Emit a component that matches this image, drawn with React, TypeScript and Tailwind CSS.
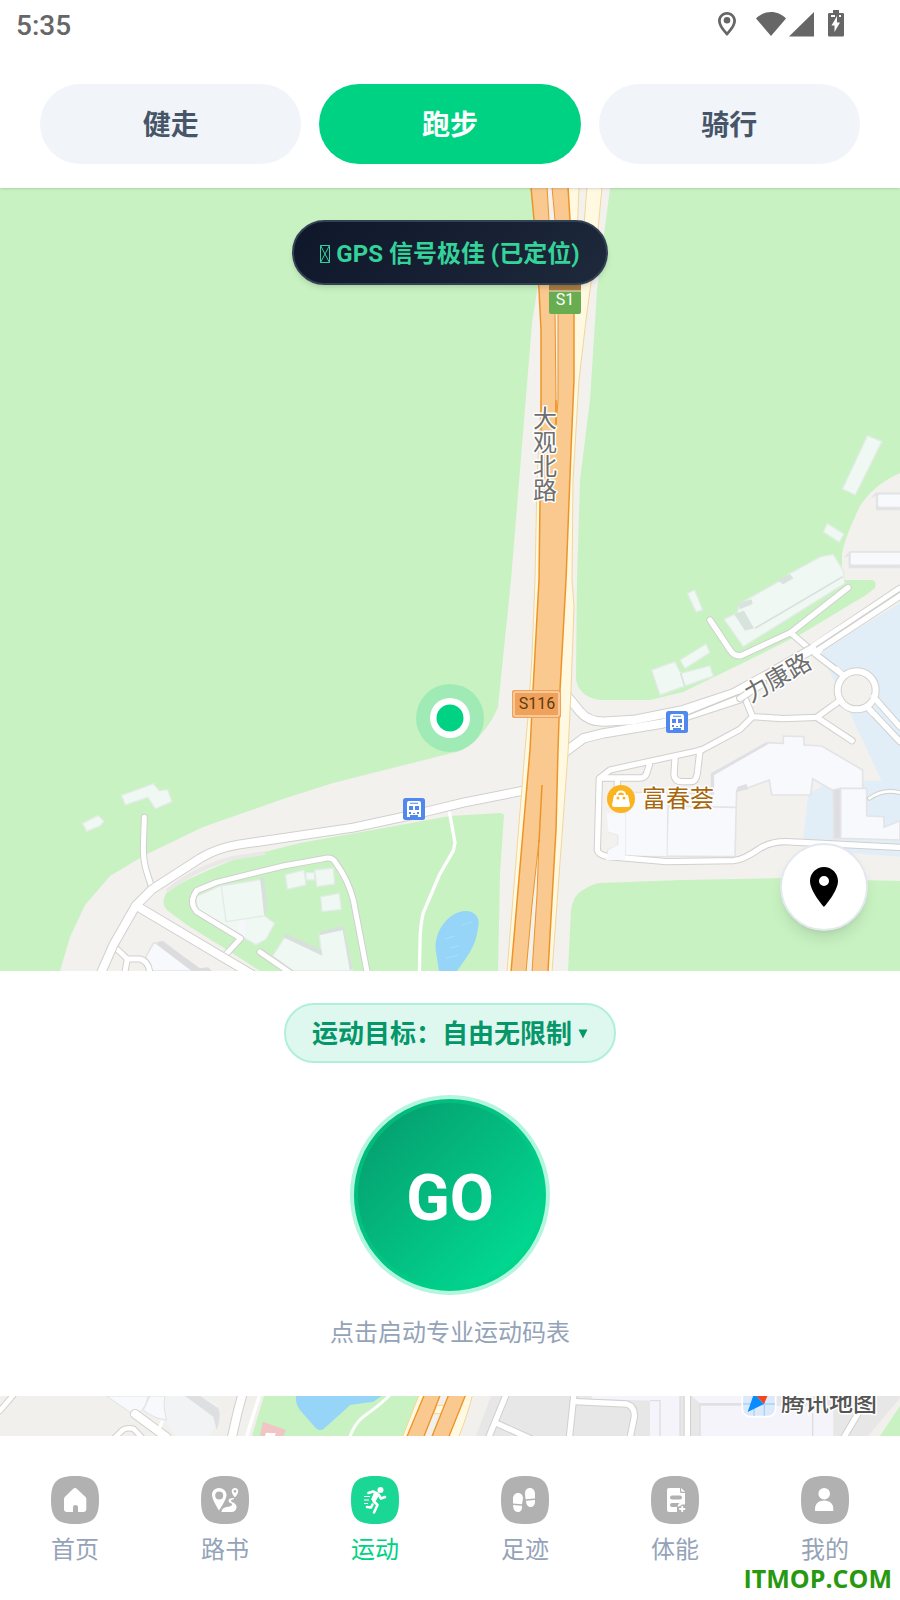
import type { ReactNode } from "react";

const FONT = "font-[Roboto,'Noto_Sans_CJK_SC',sans-serif]";

const SPORTS = ["健走", "跑步", "骑行"];

function StatusBar() {
  return (
    <div className="flex h-12 items-center justify-between px-4 text-[#666666]">
      <span className="pt-1 text-[28px] leading-8 font-medium">5:35</span>
      <svg viewBox="0 0 140 32" className="mr-9 h-8 w-[140px]" fill="#666666" aria-hidden="true">
        <path
          fillRule="evenodd"
          d="M19 4c-5 0-9 4-9 9 0 6 9 15 9 15s9-9 9-15c0-5-4-9-9-9zm0 2.800c3.600 0 6.200 2.700 6.200 6.200 0 3.500-3.500 8-6.200 11-2.700-3-6.200-7.500-6.200-11 0-3.500 2.600-6.200 6.200-6.200z"
        />
        <circle cx="19" cy="12.300" r="3.300" />
        <path d="M63 28 48 10.500C52 6.500 57 4 63 4s11 2.500 15 6.500z" />
        <path d="M106 4v24.500H81z" />
        <path d="M125 2h6v3h3.500c1 0 1.500.500 1.500 1.500v20.500c0 1-.5 1.500-1.500 1.500h-13c-1 0-1.500-.5-1.500-1.500V6.500c0-1 .5-1.500 1.500-1.500h3.500z" />
        <path d="M129 8v6.500h3l-5.500 9.500v-6.500h-3zM123 7h4v2h-4zM131 7h2v2h-2z" fill="#fff" />
      </svg>
    </div>
  );
}

function BusStop({ x, y }: { x: number; y: number }) {
  return (
    <g transform={`translate(${x} ${y})`}>
      <rect width="22" height="22" rx="2.500" fill="#5088f0" />
      <path d="M4 5q0-2 2-2h10q2 0 2 2v14h-3v-2H7v2H4z" fill="#fff" />
      <path d="M7 4.800h8v1H7zM6 8h4v4H6zM12 8h4v4h-4zM6 14h2v2H6zM14 14h2v2h-2zM10 15h2v1h-2z" fill="#5088f0" />
    </g>
  );
}

function Roads({ paths, width }: { paths: string[]; width: number }) {
  return (
    <g fill="none" strokeLinecap="round" strokeLinejoin="round">
      {paths.map((d) => (
        <path key={d} d={d} stroke="#d0d0ce" strokeWidth={width + 6} />
      ))}
      {paths.map((d) => (
        <path key={d} d={d} stroke="#ffffff" strokeWidth={width} />
      ))}
    </g>
  );
}

function MainMap() {
  return (
    <svg viewBox="0 188 900 783" className="block h-auto w-full" role="img" aria-label="地图">
      <rect y="188" width="900" height="783" fill="#c8f2c2" />
      <path
        fill="#f2f1ee"
        d="M531 188 538 285 532 323 511 580 498 707Q492 722 482 733 474 744 460 751L333 783 283 799 203 827 145 855 110 876 85 905 70 937 60 971H900V473Q885 480 877 487 861 500 855 517 846 535 842 553L842 579 846 580H872Q877 581 875 588L866 595 803 633 743 663 683 692 650 700H600Q588 698 583 693 576 686 576 677L577 580 580 480 590 400 597 290 610 188Z"
      />
      <path fill="#c8f2c2" d="M568 971 571 910Q573 895 583 890 592 884 600 883L683 880 783 878 900 881V971Z" />
      <path
        fill="#c8f2c2"
        d="M498 971 500 873 504 815 501 813 450 816 400 825 300 843 233 860Q183 880 167 892 160 902 167 910L187 925 240 958 260 971Z"
      />
      <path fill="none" stroke="#e9e8e6" strokeWidth="4" d="M167 891Q195 868 233 858L265 853" />

      {/* campus lakeside area and buildings, east */}
      <g transform="translate(450 540) scale(.333333)">
        <path fill="#e1eef7" d="M1350 190 1110 335 1200 520 1295 722H1150L1075 760 1060 895 1150 935 1350 950Z" />
        <g fill="#f7f9fc" stroke="#e4e4e6" strokeWidth="5" strokeLinejoin="round">
          <path fill="#e0e0e2" d="M1188 50 1198 38V82H1350V36H1200z" />
          <rect x="1200" y="36" width="170" height="40" rx="6" />
          <path fill="#dfdfe1" d="M1268-130 1280-140V-92H1350V-140H1282z" />
          <rect x="1282" y="-139" width="80" height="42" rx="8" />
          <path d="M1000 610V588L1062 590V615L1115 618 1238 690V748L1150 752 1088 716 1082 765H965L958 720 890 745 860 750 855 950 525 948V960L470 955 475 930 505 918V885L478 875V825H525V757L790 762V700L950 608z" />
          <path fill="none" d="M655 765 650 948M525 757V960M650 798 858 802" />
          <path fill="#dedee2" d="M1150 750 1172 745V895H1152z" />
          <path d="M1172 745H1250V828L1302 830V862L1350 842V900L1172 895z" />
        </g>
        <path fill="#e0e0e4" d="M782 700 948 608 955 612 792 706V762L782 764zM862 740 890 732 895 748 860 756z" />
        <g fill="#eff8f3" stroke="#e2ebe5" strokeWidth="4" strokeLinejoin="round">
          <path d="M1252-313 1296-296 1216-135 1177-153z" />
          <path d="M1132-50 1182-18 1168 7 1120-24z" />
          <path d="M1112 50 1150 43 1180 92 1185 130 880 320 822 238 862 218 870 190 985 125 1020 100z" />
          <path d="M712 160 734 150 758 210 738 216z" />
          <path d="M605 390 675 365 692 400 780 377 790 408 700 440 630 465z" />
          <path d="M690 360 768 312 780 338 705 386z" />
        </g>
        <path fill="none" stroke="#dbe2de" strokeWidth="5" d="M915 265 1178 110M692 400 704 438" />
        <path fill="#d9e3dd" d="M852 222 882 212 912 265 885 272zM862 190 905 178 908 192 870 208zM980 120 1020 102 1030 115 1000 133z" />
      </g>
      <g transform="translate(450 540) scale(.333333)">
        <Roads
          width={16}
          paths={[
            "M780 240 840 330Q855 352 875 346L1022 278 1194 143",
            "M1022 278 1100 345 1182 408",
            "M1165 485 1100 532 1000 536 908 530 885 475",
            "M1100 532 1206 602",
            "M908 530 870 568 755 630 480 690 448 715 442 930Q445 945 475 950L650 965 850 962Q880 960 930 925 970 900 1030 906L1350 922",
            "M598 675 590 700Q585 714 570 714H452M502 714V750",
            "M675 655 672 705Q675 725 695 725H722Q738 725 742 700L750 630",
            "M1270 470 1350 560M1254 503 1350 605",
          ]}
        />
        <Roads width={8} paths={["M1258 775Q1300 745 1350 758"]} />
        <circle cx="1220" cy="451" r="57" fill="#f2f1ee" stroke="#d0d0ce" strokeWidth="24" />
        <circle cx="1220" cy="451" r="57" fill="none" stroke="#fff" strokeWidth="18" />
        <path d="M1182 408 1160 388M1165 485 1150 496M1270 470 1290 493M1254 503 1270 521" stroke="#fff" strokeWidth="16" strokeLinecap="round" />
        <Roads
          width={25}
          paths={[
            "M340 455 370 490 390 515Q415 545 460 545L550 540 700 510 850 460 960 400 1090 325 1350 150",
            "M340 640 400 595 460 580 640 550 870 475",
          ]}
        />
        <Roads width={17} paths={["M1100 332 1350 168", "M870 475 940 430"]} />
        <path d="M1090 325 1350 155M1090 325 1110 342" fill="none" stroke="#fff" strokeWidth="30" />
        <path d="M700 530 870 462M1098 322 1350 155" fill="none" stroke="#d0d0ce" strokeWidth="5" />
        <path d="M470 820H525V960H468L475 930 505 915V885L475 875zM527 760H650V948L527 946z" fill="#f7f9fc" />
      </g>

      {/* residential area, south-west */}
      <g transform="translate(0 640) scale(.333333)">
        <g fill="#eff8f3" stroke="#e2ebe5" strokeWidth="4" strokeLinejoin="round">
          <path d="M364 466 460 431 478 452 503 449 516 485 466 507 444 472 376 495z" />
          <path d="M247 550 295 526 312 544 300 558 260 574z" />
          <path d="M856 704 912 690 918 735 862 748z" />
          <path d="M918 698H944V720H918z" />
          <path d="M944 690 1000 684 1004 732 950 740z" />
          <path d="M962 770 1018 760 1024 808 966 815z" />
          <path d="M588 770 660 738 785 718 794 828 824 850 798 898 768 914 735 895 600 815Q585 795 588 770z" />
          <path d="M818 948 855 890 965 945 957 880 1030 868 1058 993H880z" />
          <path fill="none" d="M664 738 678 845 790 828" />
        </g>
        <path d="M735 840V890L715 888V842z" fill="#f5f7fd" />
        <path d="M780 715 792 712 803 805 793 826zM858 880 965 930V946L850 892zM960 875 1030 857 1058 985 1050 993 1028 870 958 886z" fill="#d8e0dc" />
        <path d="M435 955 460 910 490 905 600 993H455z" fill="#f7f9fc" stroke="#e4e4e6" strokeWidth="5" />
        <path d="M468 912 485 903 600 985 625 982 635 993H575z" fill="#dcdcde" />
      </g>
      <g transform="translate(0 640) scale(.333333)">
        <Roads
          width={15}
          paths={[
            "M433 532 430 620Q430 665 440 695L456 745",
            "M676 945 722 895 590 815Q565 785 590 752L650 727 850 678 970 656Q995 650 1005 665 1045 720 1060 780L1104 1010",
            "M780 936 880 1005",
            "M338 915 382 957 372 1010M382 957H420Q450 965 450 1010",
          ]}
        />
        <Roads
          width={24}
          paths={[
            "M298 1010 340 915 408 796 456 748 600 655Q650 625 715 614L1060 563 1250 522 1390 488 1580 450",
            "M410 798 770 1012",
          ]}
        />
        <path
          d="M1348 515 1365 608 1360 632 1318 705 1270 818Q1260 860 1260 910L1258 1010"
          fill="none"
          stroke="#fff"
          strokeWidth="10"
        />
      </g>
      <path d="M436 952C433 930 450 912 464 911 475 910 481 918 478 928 476 947 466 958 457 971H439Z" fill="#97d5f8" />
      <path d="M445 939l10-3M450 948l9-2M462 925l10-3M446 958l12-3" stroke="#a9def9" strokeWidth="1" />

      {/* expressway */}
      <path
        fill="#fef9e0"
        stroke="#f2d69a"
        strokeWidth="1"
        d="M566 187H602L598 230 586 320 579 380 573 480 572 580 574 607 571 690 568 753 552 972H507L525 750 528 717 532 657 535 580 537 480 541 400 560 300Z"
      />
      <path fill="#f2f1ee" stroke="#f2d69a" strokeWidth="1" d="M579 187H587L582 250 575 290z" />
      <path
        fill="#f9c98f"
        stroke="#ee9427"
        strokeWidth="1.500"
        d="M531 187 534 220 539 290 541 330 541 425 540 500 539 580 533 690 530 750 511 972H548L552 900 556 830 558 750 560 690 566 580 571 450 574 380 574 310 570 220 568 187Z"
      />
      <path fill="#f2f1ee" stroke="#ee9427" strokeWidth="1" d="M547 187H552L555 220 558 310 558 400 556 425 556 400 555 310 549 220Z" />
      <path d="M542 785 539 842M556 400V424" fill="none" stroke="#ee9427" strokeWidth="1.500" />
      <path d="M539 840 532 905 526 972H532L537 895Z" fill="#f2f1ee" stroke="#ee9427" strokeWidth="1" />

      <rect x="549" y="284" width="32" height="30" rx="2" fill="#68ae50" />
      <path d="M549 284H581V291H549z" fill="#ab7c40" />
      <path d="M549 291H581" stroke="#f5e8d8" />
      <text x="565" y="305" textAnchor="middle" className="font-[Roboto,sans-serif] text-[16px]" fill="#fff">
        S1
      </text>

      <rect x="512" y="690" width="49" height="28" rx="2" fill="#f1a25a" />
      <rect x="514" y="692" width="45" height="24" rx="1" fill="none" stroke="#fff0e0" />
      <text x="537" y="709" textAnchor="middle" className="font-[Roboto,sans-serif] text-[16px]" fill="#5c3b12">
        S116
      </text>

      <g
        className="font-['Noto_Sans_CJK_SC',sans-serif] text-[24px]"
        fill="#6e6e6e"
        stroke="#ffffff"
        strokeWidth="3"
        strokeLinejoin="round"
        paintOrder="stroke"
        textAnchor="middle"
      >
        <text x="545" y="454" className="[writing-mode:vertical-rl]">
          大观北路
        </text>
        <text x="778" y="686" transform="rotate(-30 778 678)">
          力康路
        </text>
        <text x="678" y="807" fill="#a8660c">
          富春荟
        </text>
      </g>

      <BusStop x={666} y={711} />
      <BusStop x={403} y={798} />

      <circle cx="621" cy="799" r="14" fill="#fbb320" />
      <path d="M614 795h14l2 10q0 2-2 2h-14q-2 0-2-2z" fill="#fff" />
      <path d="M617 796v-1q0-3.500 4-3.500t4 3.500v1" fill="none" stroke="#fff" strokeWidth="2" />
      <circle cx="618" cy="798" r="1.500" fill="#fbb320" />
      <circle cx="624" cy="798" r="1.500" fill="#fbb320" />

      <circle cx="450" cy="718" r="34" fill="#00d284" fillOpacity=".2" />
      <circle cx="450" cy="718" r="20" fill="#fff" />
      <circle cx="450" cy="718" r="13.500" fill="#00d284" />
    </svg>
  );
}

function MapStrip() {
  return (
    <svg viewBox="0 16 900 40" className="block h-auto w-full" role="img" aria-label="腾讯地图">
      <rect y="16" width="900" height="40" fill="#f1f0ed" />
      <path d="M264 16H440L405 56H252Z" fill="#c8f2c2" />
      <path d="M491 16H900V56H476Z" fill="#e7e7e7" />
      <path d="M900 18V56H868z" fill="#f1f0ed" />
      <path d="M900 26V56H880z" fill="#c8f2c2" />
      <g transform="scale(.333333)">
        <path d="M320 48 405 100 430 92Q460 115 495 120 520 165 530 168H620Q650 150 655 110 665 80 640 65L590 48z" fill="#f2f3f5" />
        <path d="M320 48H445Q440 75 425 92L395 100zM450 48H495Q488 80 500 120 460 115 430 90z" fill="#f7f9fc" stroke="#e2e2e4" strokeWidth="3" />
        <path d="M555 48H600L655 85Q665 105 650 150L640 110z" fill="#dedfe1" />
        <Roads width={14} paths={["M0 92 40 45", "M345 172 368 150Q380 142 400 146L425 172"]} />
        <Roads width={24} paths={["M405 102 500 172", "M728 40 712 100 695 175"]} />
        <path d="M778 48 740 168M488 122 476 150" stroke="#fff" strokeWidth="10" />
        <path d="M888 48H1145L1120 65 1050 75 1025 98 970 148Q955 155 945 142L900 90Q885 70 888 48z" fill="#97d5f8" />
        <path d="M788 125 858 150 850 168H780z" fill="#f1c4c5" />
        <path d="M798 158 828 160 824 168H795z" fill="#fff" />
        <path d="M1170 45Q1140 75 1090 110 1065 130 1050 168" fill="none" stroke="#fff" strokeWidth="9" />
        <path d="M1258 42H1418Q1408 90 1375 174H1206z" fill="#fef9e0" stroke="#f2d69a" strokeWidth="3" />
        <path d="M1322 42H1347L1294 174H1270z" fill="#f1f0ed" />
        <path d="M1311 76H1336L1326 101H1301z" fill="#fef9e0" stroke="#f2d69a" strokeWidth="3" />
        <path d="M1274 42H1322L1270 174H1219zM1347 42H1398L1345 174H1294z" fill="#f9c98f" stroke="#ee9427" strokeWidth="4" />
      </g>
      <g transform="translate(450 0) scale(.333333)">
        <path d="M425 48H690V168H600V62L425 56zM750 78H1150V168H750zM725 48H880V70H750z" fill="#f4f4fa" />
        <path d="M750 168V72H880M600 62H630V168M690 48V168M1088 100V168" fill="none" stroke="#dedee2" strokeWidth="4" />
        <Roads
          width={16}
          paths={["M170 40 115 175", "M140 130 240 175", "M372 40 358 175", "M375 65 530 72Q555 80 553 110L540 175", "M712 40V175", "M1260 40 1180 175"]}
        />
        <rect x="877" y="12" width="100" height="98" rx="24" fill="#dce9fb" stroke="#fff" strokeWidth="5" />
        <path d="M879 72H975M912 30V108M943 30V108" stroke="#a9d1fa" strokeWidth="4" />
        <path d="M893 96 912 40 942 72z" fill="#0a8cff" />
        <path d="M912 40 942 72 960 30z" fill="#f2471c" />
      </g>
      <text
        x="829"
        y="31"
        textAnchor="middle"
        className="font-['Noto_Sans_CJK_SC',sans-serif] text-[24px] font-medium"
        fill="#555"
        stroke="#fff"
        strokeWidth="3"
        paintOrder="stroke"
      >
        腾讯地图
      </text>
    </svg>
  );
}

const HomeGlyph = (
  <path d="M24 12q1 0 2 1l8.500 8q.8.800.8 2V33q0 3-3 3H27v-5q0-2-2.500-2T22 31v5h-6q-3 0-3-3V23q0-1.200.8-2L22 13q1-1 2-1z" />
);

const RouteGlyph = (
  <>
    <path
      fillRule="evenodd"
      d="M18 12c-4 0-7 3-7 6.800C11 24 18 34.500 18 34.500S25.500 24 25.500 18.800C25.500 15 22 12 18 12zm.2 3.500a4 4 0 1 1 0 8 4 4 0 0 1 0-8z"
    />
    <path
      fillRule="evenodd"
      d="M34 12c-2 0-3.300 1.500-3.300 3.300C30.700 18 34 21.500 34 21.500s3.200-3.500 3.200-6.200C37.200 13.500 36 12 34 12zm0 1.900a1.400 1.400 0 1 1 0 2.800 1.400 1.400 0 0 1 0-2.800z"
    />
    <path d="M33 22q-6 0-5.500 3 .2 1.500 3 2.500 1.500 1 0 2-1 1-5 1.500-5 1-5 5h10q4 0 5-4 .5-3-2.500-5-3.500-1.500-3-2.500t3-1.500z" />
  </>
);

const RunGlyph = (
  <>
    <circle cx="29.500" cy="14" r="3" />
    <path
      d="M17.500 17 22 15.500l4.500 2-4 7.500 4 4-3.500 7.500M27.500 18.500 30 22.500l4-1.500M21.500 28.500l-1.500 3-4-.500"
      fill="none"
      stroke="#fff"
      strokeWidth="2.600"
      strokeLinecap="round"
      strokeLinejoin="round"
    />
    <path d="m23.500 15.500 5 3-4.500 8-4-3z" />
    <path d="M13 20.500h6M13 24h5M13 27.500h4" stroke="#fff" strokeWidth="1.200" />
  </>
);

const StepsGlyph = (
  <>
    <path d="M24 17.500c0-3.300 2-5.500 5-5.500s5 2.500 5 6v4.500l-9.500.700zM25 24.700l9-.7c.3 4-1 7-4.200 7S25.200 28.500 25 24.700z" />
    <path d="M22 22.500c0-3.300-2-5.500-5-5.500s-5 2.500-5 6v4.500l9 .700zM12.200 29l8.800.7c.2 4-1 6.300-4.200 6.300s-4.800-3-4.600-7z" />
  </>
);

const ReportGlyph = (
  <>
    <path
      fillRule="evenodd"
      d="M18 12h11v3.500q0 1.500 1.500 1.500H34v11.500h-3l-2 1.500-3 1v5h-8q-2 0-2-2V14q0-2 2-2zm3 7.500q-2 0-2 2t2 2h8q2 0 2-2t-2-2zm0 7.500q-2 0-2 2t2 2h5.500q0-2 2-4z"
    />
    <path d="M30.200 12v2.800q0 1 1 1H34z" />
    <path d="M31.200 30v6M28.200 33h6" stroke="#fff" strokeWidth="1.800" />
  </>
);

const UserGlyph = (
  <>
    <circle cx="23.200" cy="17.700" r="5.800" />
    <path d="M14 35v-2c0-5 3.500-8.500 9.200-8.500S32.300 28 32.300 33v2z" />
  </>
);

const NAV: { label: string; glyph: ReactNode }[] = [
  { label: "首页", glyph: HomeGlyph },
  { label: "路书", glyph: RouteGlyph },
  { label: "运动", glyph: RunGlyph },
  { label: "足迹", glyph: StepsGlyph },
  { label: "体能", glyph: ReportGlyph },
  { label: "我的", glyph: UserGlyph },
];

function BottomNav() {
  return (
    <nav className="relative grid grid-cols-6 bg-white pt-[39px] pb-8">
      {NAV.map(({ label, glyph }) => {
        const active = label === "运动";
        return (
          <a
            key={label}
            href="#"
            aria-current={active ? "page" : undefined}
            className={`flex flex-col items-center gap-2 text-2xl leading-9 ${active ? "text-[#00d284]" : "text-[#94a3b8]"}`}
          >
            <svg viewBox="0 0 48 48" className="size-12" fill="#fff" aria-hidden="true">
              <path
                d="M24 0C42 0 48 6 48 24S42 48 24 48 0 42 0 24 6 0 24 0z"
                fill={active ? "#1bd796" : "#b1b1b1"}
              />
              {glyph}
            </svg>
            {label}
          </a>
        );
      })}
      <span className="absolute right-2 bottom-2 font-['Open_Sans',sans-serif] text-[25px] leading-7 font-bold text-[#28980f]">
        ITMOP.COM
      </span>
    </nav>
  );
}

export default function App() {
  return (
    <div className={`flex min-h-screen flex-col bg-white ${FONT}`}>
      <header className="relative z-10 bg-white shadow-sm">
        <StatusBar />
        <div className="grid grid-cols-3 gap-[18px] px-10 pt-9 pb-6">
          {SPORTS.map((sport) => (
            <button
              key={sport}
              type="button"
              className={`h-20 rounded-full pt-1 text-[28px] font-bold ${
                sport === "跑步" ? "bg-[#00d284] text-white" : "bg-[#f1f5f9] text-[#475569]"
              }`}
            >
              {sport}
            </button>
          ))}
        </div>
      </header>

      <main className="flex-1">
        <section className="relative">
          <MainMap />
          <div className="absolute inset-x-0 top-8 flex justify-center">
            <div className="flex h-[65px] items-center gap-1.5 rounded-full border-2 border-[#334155] bg-linear-135 from-[#0f172a] to-[#1e293b] px-[26px] pt-0.5 text-2xl font-bold text-[#34d399] shadow-md">
              <svg viewBox="0 0 10 18" className="h-[18px] w-2.5" fill="none" stroke="#34d399" aria-hidden="true">
                <path d="M.5.5h9v17h-9zl9 17M9.500.5l-9 17" />
              </svg>
              GPS 信号极佳 (已定位)
            </div>
          </div>
          <button
            type="button"
            aria-label="定位"
            className="absolute right-8 bottom-10 flex size-[88px] items-center justify-center rounded-full border-2 border-[#e2e8f0] bg-white shadow-lg"
          >
            <svg viewBox="0 0 28 40" className="h-10 w-7" aria-hidden="true">
              <path
                fillRule="evenodd"
                d="M14 0C6.300 0 0 6.300 0 14c0 10.500 14 26 14 26s14-15.500 14-26C28 6.300 21.700 0 14 0zm0 9a5 5 0 1 1 0 10 5 5 0 0 1 0-10z"
              />
            </svg>
          </button>
        </section>

        <section className="flex flex-col items-center bg-white pt-8 pb-[45px]">
          <button
            type="button"
            className="flex h-[60px] items-center gap-1.5 rounded-full border-2 border-[#b0f0da] bg-[#dff8ef] px-[26px] pt-0.5 text-[26px] font-bold text-[#059669]"
          >
            运动目标：自由无限制
            <svg viewBox="0 0 10 10" className="size-2.5" fill="#059669" aria-hidden="true">
              <path d="M.5.5h9L5 9.500z" />
            </svg>
          </button>
          <button
            type="button"
            className="mt-8 size-[200px] rounded-full border-4 border-[#b3f6e0] bg-linear-135 from-[#059669] to-[#00e699] bg-origin-border pt-2 text-[64px] font-bold text-white shadow-[inset_0_0_0_4px_rgba(0,210,132,0.5)]"
          >
            GO
          </button>
          <p className="mt-5 text-2xl leading-9 text-[#94a3b8]">点击启动专业运动码表</p>
        </section>

        <MapStrip />
      </main>

      <BottomNav />
    </div>
  );
}
